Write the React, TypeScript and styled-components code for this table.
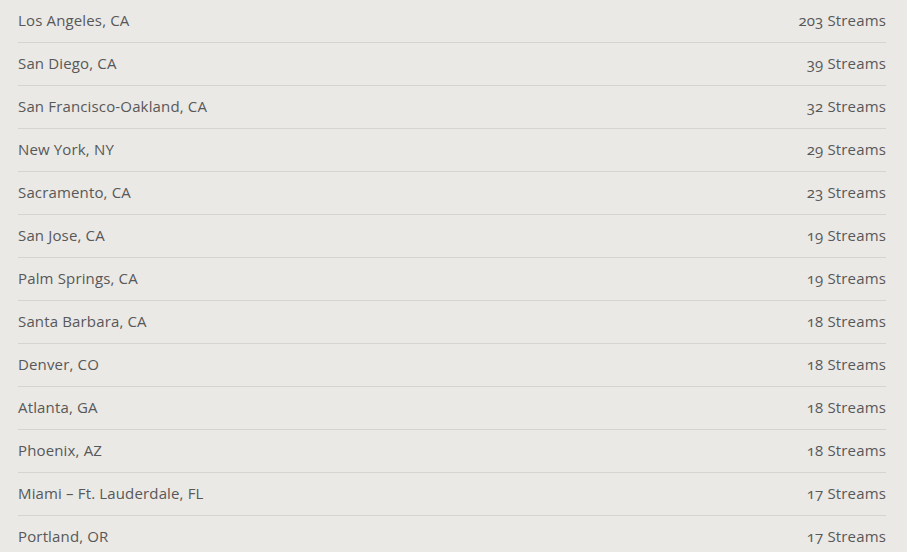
import styled, {createGlobalStyle} from 'styled-components';

const markets = [
    {name: 'Los Angeles, CA', streams: 203},
    {name: 'San Diego, CA', streams: 39},
    {name: 'San Francisco-Oakland, CA', streams: 32},
    {name: 'New York, NY', streams: 29},
    {name: 'Sacramento, CA', streams: 23},
    {name: 'San Jose, CA', streams: 19},
    {name: 'Palm Springs, CA', streams: 19},
    {name: 'Santa Barbara, CA', streams: 18},
    {name: 'Denver, CO', streams: 18},
    {name: 'Atlanta, GA', streams: 18},
    {name: 'Phoenix, AZ', streams: 18},
    {name: 'Miami – Ft. Lauderdale, FL', streams: 17},
    {name: 'Portland, OR', streams: 17},
];

export default function App() {
    return (
        <>
            <GlobalStyle />
            <List>
                {markets.map(m => (
                    <Row key={m.name}>
                        <Market>{m.name}</Market>
                        <Count>{m.streams} Streams</Count>
                    </Row>
                ))}
            </List>
        </>
    );
}

const GlobalStyle = createGlobalStyle`
    body {
        margin: 0;
        background: #eae9e6;
        font-family: "Open Sans", "Liberation Sans", sans-serif;
    }
`;

const List = styled.ul`
    list-style: none;
    margin: 0;
    padding: 0 21px 0 18px;
`;

const Row = styled.li`
    display: flex;
    justify-content: space-between;
    align-items: center;
    box-sizing: border-box;
    height: 43px;
    padding-bottom: 2px;
    border-bottom: 1px solid #d6d4d1;
    font-size: 15px;
    letter-spacing: 0.15px;
    color: #585858;
`;

const Market = styled.span``;

const Count = styled.span`
    font-variant-numeric: oldstyle-nums;
`;
